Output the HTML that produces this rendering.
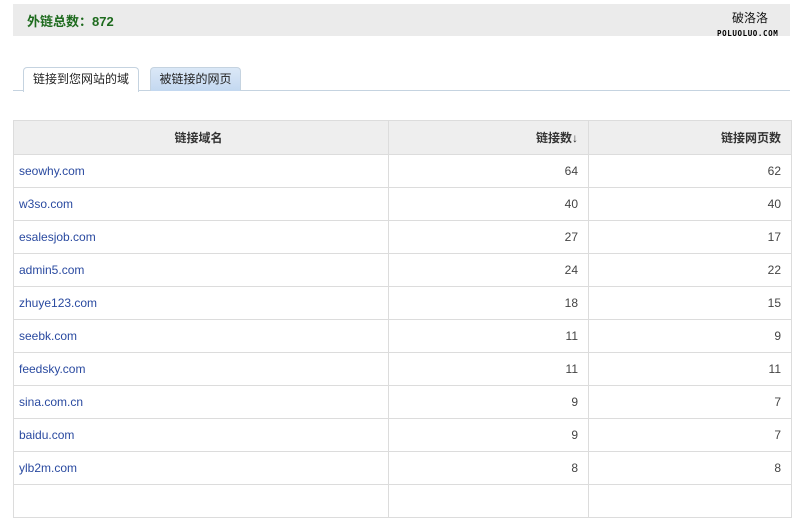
<!DOCTYPE html>
<html><head><meta charset="utf-8"><style>
body{margin:0;width:798px;height:490px;overflow:hidden;background:#fff;font-family:"Liberation Sans","Noto Sans CJK SC",sans-serif;position:relative}
.hdr{position:absolute;left:13px;top:4px;width:777px;height:32px;background:#ebebeb}
.title{position:absolute;left:14px;top:7px;font-size:13px;font-weight:bold;color:#1e6b1e}
.logo1{position:absolute;left:719px;top:5px;font-size:12px;color:#111}
.logo2{position:absolute;left:704px;top:25px;font-size:7.5px;font-family:"DejaVu Sans Mono",monospace;color:#000;letter-spacing:0.6px;font-weight:bold}
.line{position:absolute;left:13px;top:90px;width:777px;height:1px;background:#c5d3e0}
.tab{position:absolute;top:67px;height:23px;border:1px solid #c5d3e0;border-bottom:none;border-radius:4px 4px 0 0;font-size:12px;line-height:22px;text-align:center;color:#222}
.t1{left:23px;width:114px;background:#fff;height:24px;z-index:2}
.t2{left:150px;width:89px;background:linear-gradient(#dbe8f7,#c3d8f0)}
table{position:absolute;left:13px;top:120px;width:778px;border-collapse:collapse;font-size:12px;table-layout:fixed}
td,th{border:1px solid #dcdcdc;height:33px;padding:0 10px 0 5px;box-sizing:border-box}
th{background:#eeeeee;height:34px;font-weight:bold;color:#333}
td{color:#444}
td.n,th.n{text-align:right}
a{color:#2a4aa0;text-decoration:none}
</style></head><body>
<div class="hdr"><div class="title">外链总数：872</div><div class="logo1">破洛洛</div><div class="logo2">POLUOLUO.COM</div></div>
<div class="line"></div>
<div class="tab t1">链接到您网站的域</div>
<div class="tab t2">被链接的网页</div>
<table>
<colgroup><col style="width:375px"><col style="width:200px"><col style="width:203px"></colgroup>
<tr><th>链接域名</th><th class="n">链接数↓</th><th class="n">链接网页数</th></tr>
<tr><td><a>seowhy.com</a></td><td class="n">64</td><td class="n">62</td></tr>
<tr><td><a>w3so.com</a></td><td class="n">40</td><td class="n">40</td></tr>
<tr><td><a>esalesjob.com</a></td><td class="n">27</td><td class="n">17</td></tr>
<tr><td><a>admin5.com</a></td><td class="n">24</td><td class="n">22</td></tr>
<tr><td><a>zhuye123.com</a></td><td class="n">18</td><td class="n">15</td></tr>
<tr><td><a>seebk.com</a></td><td class="n">11</td><td class="n">9</td></tr>
<tr><td><a>feedsky.com</a></td><td class="n">11</td><td class="n">11</td></tr>
<tr><td><a>sina.com.cn</a></td><td class="n">9</td><td class="n">7</td></tr>
<tr><td><a>baidu.com</a></td><td class="n">9</td><td class="n">7</td></tr>
<tr><td><a>ylb2m.com</a></td><td class="n">8</td><td class="n">8</td></tr>
<tr><td></td><td></td><td></td></tr>
</table>
</body></html>
